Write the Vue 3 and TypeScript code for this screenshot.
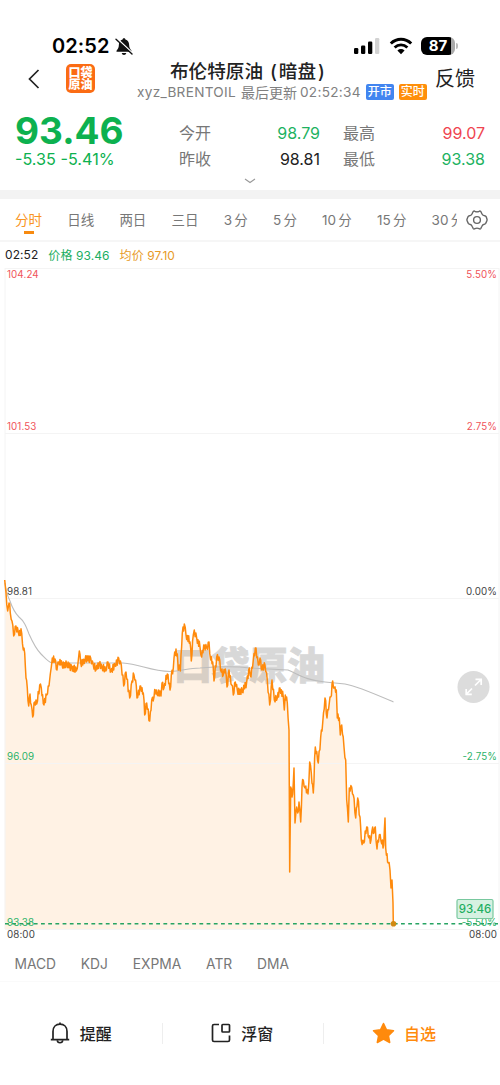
<script setup lang="ts">
interface Stat {
  label: string
  value: string
  tone: 'up' | 'down' | 'flat'
}

const stats: Stat[] = [
  { label: '今开', value: '98.79', tone: 'down' },
  { label: '最高', value: '99.07', tone: 'up' },
  { label: '昨收', value: '98.81', tone: 'flat' },
  { label: '最低', value: '93.38', tone: 'down' },
]

const periods: string[] = ['分时', '日线', '两日', '三日', '3 分', '5 分', '10 分', '15 分', '30 分']
const indicators: string[] = ['MACD', 'KDJ', 'EXPMA', 'ATR', 'DMA']
const gridRows: number[] = [0.5, 165.5, 330.5, 495.5, 661.5]

type Point = [number, number]

// Price samples in chart space: x is minutes scaled to pixels, y grows downward.
const samples: Point[] = [
  [4.7, 312], [6, 325], [7.7, 343], [9, 335], [10.3, 345], [12, 353], [13.7, 368], [16, 358], [18.3, 364], [21.7, 365],
  [23.3, 382], [24.7, 385], [26, 410], [27.3, 420], [28.7, 438], [30, 426], [31.3, 437], [32.7, 449], [34.7, 434],
  [36.7, 436], [39.7, 417], [41.3, 420], [44, 437], [46.7, 427], [49, 418], [50.3, 406], [51.3, 399], [52.3, 390],
  [55, 391], [57, 402], [58.7, 394], [62, 396], [66.7, 397], [71.7, 399], [76.3, 403], [78, 395], [79.3, 383],
  [80.7, 395], [85, 392], [90.7, 390], [93.3, 397], [96, 402], [99.3, 395], [102, 399], [105.7, 403], [108, 394],
  [111, 403], [115, 398], [118.7, 390], [121.3, 397], [123.7, 418], [126, 404], [129.7, 430], [132, 413], [134, 407],
  [135.6, 412], [137, 430], [140.7, 418], [143.3, 425], [144.7, 447], [146.7, 435], [149.7, 453], [151.7, 432],
  [154, 429], [155.3, 422], [157.3, 427], [160, 423], [161, 428], [162, 415], [164, 420], [167.3, 406], [170, 422],
  [171.3, 407], [173.3, 400], [174.7, 384], [177.3, 386], [178.3, 402], [179.3, 397], [180.3, 403], [182.3, 365],
  [184.3, 356], [186, 367], [190, 374], [191.3, 393], [193.3, 367], [194.3, 362], [196.7, 370], [200, 379],
  [201.7, 389], [204.3, 377], [206.7, 380], [209, 374], [210.7, 392], [212.7, 394], [214, 413], [216.7, 389],
  [219, 389], [221.3, 404], [223.3, 407], [225.3, 401], [227, 419], [229, 402], [231.7, 417], [233.3, 427],
  [235.3, 414], [237.3, 422], [242.3, 424], [246.7, 414], [249.3, 400], [251, 409], [253.3, 392], [256, 380],
  [258.3, 397], [260, 390], [262, 402], [265, 397], [267.3, 412], [269.7, 437], [272, 412], [274.3, 432],
  [277.3, 430], [280, 420], [283.3, 429], [284.3, 442], [285.3, 427], [287.3, 435], [289, 462], [289.7, 604],
  [290.7, 519], [292, 529], [293.3, 515], [294, 500], [295, 555], [296.7, 539], [297.7, 545], [299, 534],
  [300.7, 554], [302, 519], [303.3, 512], [305, 520], [308, 526], [309.7, 494], [311.3, 505], [313.3, 525],
  [315.3, 479], [318.3, 495], [320.7, 469], [322.7, 455], [325, 430], [327, 450], [329.3, 435], [330.7, 429],
  [332.7, 413], [334.3, 420], [336.3, 422], [337.3, 450], [339.3, 450], [340.3, 467], [341.7, 457], [344, 479],
  [345.7, 492], [346.7, 532], [348.3, 554], [349.3, 520], [351.7, 519], [353.3, 527], [355.7, 550], [357.7, 530],
  [360, 549], [361.3, 572], [363.7, 575], [366.7, 559], [369, 570], [371, 572], [372.7, 559], [374, 565],
  [375.3, 559], [377, 581], [379.3, 567], [381, 573], [383.7, 577], [385, 550], [385.7, 580], [388.3, 595],
  [390, 602], [391, 620], [392, 612], [393, 635], [393.3, 656],
]

// Fills gaps between samples with small ticks so the line keeps its intraday texture.
function withTicks(points: Point[]): Point[] {
  const out: Point[] = []
  let tick = 0
  points.forEach(([x, y], i) => {
    out.push([x, y])
    const next = points[i + 1]
    if (!next) return
    const count = Math.floor((next[0] - x) / 0.65)
    for (let k = 1; k < count; k++) {
      tick += 1
      const t = k / count
      const sway = (tick % 2 ? 1 : -1) * (1.8 + ((tick * 7) % 5) * 0.55)
      out.push([x + (next[0] - x) * t, y + (next[1] - y) * t + sway])
    }
  })
  return out
}

const pricePath = 'M' + withTicks(samples).map(([x, y]) => `${x.toFixed(1)} ${y.toFixed(1)}`).join('L')
const areaPath = `${pricePath}V661H4.7Z`
const averagePath =
  'M5 315C6 324 8 329 10 333C13 342 15 345 19 349C24 353 26 358 29 366C33 375 36 381 41 386C45 390 48 394 52 395H123' +
  'C140 396 150 403 170 403.5C182 403 188 400 200 400C212 399 235 398 250 400L288 402' +
  'C300 407 305 412 325 414L345 416C357 418 375 426 393.5 434'
</script>

<template>
  <main class="screen">
    <div class="status">
      <div class="clock">
        <span>02:52</span>
        <svg width="18" height="19" viewBox="0 0 18 19">
          <path d="M9 1.2c.9 0 1.3.5 1.4 1.2 2.6.7 3.6 2.8 3.7 5.2.1 3 .8 4.400 2.400 6.100v1.100H1.500v-1.100C3.200 12 3.800 10.500 3.900 7.600 4 5.200 5 3.100 7.600 2.400 7.700 1.700 8.100 1.200 9 1.200ZM6.700 16h4.600c-.3 1.300-1.100 2-2.300 2s-2-.7-2.300-2Z" fill="#111" />
          <path d="M1.500 1.200 18 16.500" stroke="#fff" stroke-width="1.600" />
          <path d="M1 2.300 17 17" stroke="#111" stroke-width="1.400" stroke-linecap="round" />
        </svg>
      </div>
      <div class="radios">
        <svg width="27" height="18" viewBox="0 0 27 18">
          <rect x="0" y="11" width="4.300" height="6" rx="1.200" />
          <rect x="7" y="8.500" width="4.300" height="8.500" rx="1.200" />
          <rect x="14" y="4.500" width="4.300" height="12.500" rx="1.200" />
          <rect x="21" y="1" width="4.300" height="16" rx="1.200" fill="#d2d2d2" />
        </svg>
        <svg class="wifi" width="24" height="18" viewBox="0 0 24 18">
          <path d="M1.800 6.500C7.700 .9 16.300 .9 22.200 6.500" fill="none" stroke="#000" stroke-width="3" />
          <path d="M5.600 10.500C9.400 7 14.600 7 18.400 10.500" fill="none" stroke="#000" stroke-width="2.900" />
          <path d="M8.400 13.500c2.200-1.900 5-1.900 7.200 0L12 17.200Z" />
        </svg>
        <div class="battery"><span class="cell">87</span><i class="cap"></i></div>
      </div>
    </div>

    <header class="nav">
      <svg class="back" width="12" height="20" viewBox="0 0 12 20">
        <path d="M10.500 1 1.500 10l9 9" fill="none" stroke="#222" stroke-width="1.700" />
      </svg>
      <div class="logo"><span>口袋</span><span>原油</span></div>
      <div class="heading">
        <h1>布伦特原油<span class="paren-open">(</span>暗盘<span class="paren-close">)</span></h1>
        <div class="sub">
          <span class="symbol">xyz_BRENTOIL</span>
          <span class="updated">最后更新</span>
          <span class="symbol">02:52:34</span>
          <b class="tag open">开市</b>
          <b class="tag live">实时</b>
        </div>
      </div>
      <span class="feedback">反馈</span>
    </header>

    <section class="quote">
      <div class="last">
        <strong>93.46</strong>
        <span>-5.35 -5.41%</span>
      </div>
      <dl class="stats">
        <div v-for="s in stats" :key="s.label" class="stat">
          <dt>{{ s.label }}</dt>
          <dd :class="s.tone">{{ s.value }}</dd>
        </div>
      </dl>
    </section>
    <div class="expand">
      <svg width="12" height="6" viewBox="0 0 12 6">
        <path d="M1 1l5 3.500L11 1" fill="none" stroke="#999" stroke-width="1.100" />
      </svg>
    </div>
    <div class="band"></div>

    <nav class="periods">
      <div class="track">
        <span v-for="(p, i) in periods" :key="p" class="period" :class="{ active: i === 0 }">{{ p }}</span>
      </div>
      <svg class="gear" width="22" height="20" viewBox="0 0 22 20">
        <path d="M7.200 1.500Q8 .7 9 1.300 11 2.400 13 1.300 14 .7 14.800 1.500L16 4Q16.800 5.600 18.600 5.700 19.800 5.800 20.200 6.800L21 9.300Q21.200 10 20.900 10.700L19.700 13.400Q19.200 14.200 18.300 14.300 16.600 14.500 15.900 16.200L14.900 18.300Q14.200 19.300 13.100 18.700 11 17.600 8.900 18.700 7.800 19.300 7.100 18.300L6.100 16.200Q5.400 14.500 3.700 14.300 2.800 14.200 2.300 13.400L1.100 10.700Q.8 10 1 9.300L2 6.800Q2.400 5.800 3.500 5.700 5.200 5.600 6 4Z" fill="none" stroke="#666" stroke-width="1.400" stroke-linejoin="round" />
        <circle cx="11" cy="10" r="3.400" fill="none" stroke="#666" stroke-width="1.400" />
      </svg>
    </nav>

    <div class="legend">
      <span class="time">02:52</span>
      <span class="price">价格 93.46</span>
      <span class="avg">均价 97.10</span>
    </div>

    <section class="chart">
      <svg width="500" height="676" viewBox="0 0 500 676">
        <path :d="areaPath" fill="#fff2e4" />
        <line v-for="y in gridRows" :key="y" x1="5" :y1="y" x2="499" :y2="y" class="grid" />
        <path d="M5 0V661M499 0V661" class="grid" />
        <text x="174" y="411" class="watermark" textLength="151" lengthAdjust="spacingAndGlyphs">口袋原油</text>
        <path :d="averagePath" fill="none" stroke="#bdbdbd" stroke-width="1.100" />
        <path :d="pricePath" fill="none" stroke="#ff8a0c" stroke-width="1.500" stroke-linejoin="round" />
        <g class="axis">
          <text x="7" y="10" class="up">104.24</text>
          <text x="7" y="162" class="up">101.53</text>
          <text x="7" y="327">98.81</text>
          <text x="7" y="492" class="down">96.09</text>
          <text x="7" y="658" class="down">93.38</text>
          <text x="7" y="670">08:00</text>
          <g text-anchor="end">
            <text x="497" y="10" class="up">5.50%</text>
            <text x="497" y="162" class="up">2.75%</text>
            <text x="497" y="327">0.00%</text>
            <text x="497" y="492" class="down">-2.75%</text>
            <text x="497" y="658" class="down">-5.50%</text>
            <text x="497" y="670">08:00</text>
          </g>
        </g>
        <line x1="5" y1="655.800" x2="498" y2="655.800" stroke="#27a463" stroke-width="1.500" stroke-dasharray="3.800 3.400" />
        <circle cx="393.500" cy="655.800" r="2.800" fill="#d18a13" />
        <rect x="457" y="631.500" width="36" height="19" rx="1.500" fill="#d6f1e2" stroke="#78c89e" stroke-width="1.200" />
        <text x="475" y="645.300" class="badge" text-anchor="middle">93.46</text>
        <circle cx="473.500" cy="419" r="16" fill="#dcdcdc" />
        <path d="M475 417.500 481 411.500M475.500 411.300H481.200V417M472 420.500 466.500 426M466.200 421V426.300H471.800" fill="none" stroke="#fff" stroke-width="1.700" />
      </svg>
    </section>

    <div class="indicators">
      <span v-for="n in indicators" :key="n">{{ n }}</span>
    </div>

    <footer class="actions">
      <div class="action">
        <svg width="20" height="22" viewBox="0 0 20 22">
          <path d="M3 17V9.500C3 5 6 2.200 10 2.200S17 5 17 9.500V17M.8 17.600H19.200M10 .5V2.200" fill="none" stroke="#222" stroke-width="1.700" />
          <path d="M7.300 18.200C7.500 21.600 12.500 21.600 12.700 18.200" fill="none" stroke="#222" stroke-width="1.600" />
        </svg>
        <span>提醒</span>
      </div>
      <div class="action">
        <svg width="20" height="20" viewBox="0 0 20 20">
          <path d="M8 1.500H3Q1.500 1.500 1.500 3V17Q1.500 18.500 3 18.500H17Q18.500 18.500 18.500 17V12.500" fill="none" stroke="#222" stroke-width="1.700" />
          <rect x="11" y="1.500" width="7.500" height="7.500" rx=".8" fill="none" stroke="#222" stroke-width="1.700" />
        </svg>
        <span>浮窗</span>
      </div>
      <div class="action fav">
        <svg width="23" height="22" viewBox="0 0 23 22">
          <path d="M11.500 1.500 14.500 7.800 21.500 8.700 16.400 13.600 17.700 20.500 11.500 17.200 5.300 20.500 6.600 13.600 1.500 8.700 8.500 7.800Z" fill="#ff8a0c" stroke="#ff8a0c" stroke-width="1.500" stroke-linejoin="round" />
        </svg>
        <span>自选</span>
      </div>
    </footer>
  </main>
</template>

<style>
body {
  margin: 0;
  background: #fff;
}
</style>

<style scoped>
.screen {
  width: 500px;
  height: 1085px;
  overflow: hidden;
  background: #fff;
  color: #222;
  font-family: Inter, "Noto Sans CJK SC", sans-serif;
  display: flex;
  flex-direction: column;
}
.screen > * {
  flex: none;
  box-sizing: border-box;
}
.status {
  height: 58px;
  padding: 34px 42px 0 52px;
  display: flex;
  justify-content: space-between;
}
.clock {
  display: flex;
  align-items: center;
  height: 24px;
  gap: 5px;
  font-size: 20px;
  font-weight: 600;
  color: #000;
}
.clock span {
  letter-spacing: 0.1px;
}
.radios {
  display: flex;
  align-items: center;
  height: 24px;
}
.wifi {
  margin: 0 8px 0 8px;
}
.battery {
  display: flex;
  align-items: center;
  gap: 1px;
}
.cell {
  width: 34px;
  height: 18px;
  border-radius: 6px;
  background: linear-gradient(90deg, #000 88%, #aaa 88%);
  color: #fff;
  font-size: 15px;
  line-height: 18px;
  font-weight: 700;
  text-align: center;
}
.cap {
  width: 2px;
  height: 6px;
  border-radius: 0 2px 2px 0;
  background: #bbb;
}
.nav {
  height: 46px;
  padding: 0 24px 0 28px;
  display: flex;
  align-items: flex-start;
}
.back {
  margin-top: 11px;
}
.logo {
  width: 29px;
  height: 29px;
  margin: 6px 0 0 26px;
  border-radius: 5px;
  background: #fb6c14;
  color: #fff;
  display: flex;
  flex-direction: column;
  align-items: center;
  justify-content: center;
  font-size: 12px;
  line-height: 12px;
  font-weight: 900;
}
.heading {
  width: 298px;
  margin-left: 42px;
}
h1 {
  margin: 0;
  padding-left: 33px;
  font-size: 18.6px;
  line-height: 26px;
  font-weight: 500;
  white-space: pre;
}
.paren-open {
  margin: 0 2px 0 7px;
}
.paren-close {
  margin-left: 2px;
}
.sub {
  display: flex;
  align-items: center;
  height: 16px;
  font-size: 13px;
  color: #808080;
  white-space: nowrap;
}
.symbol {
  font-size: 13.600px;
  letter-spacing: 0.3px;
}
.updated {
  margin: 0 3px 0 5px;
  font-size: 14px;
}
.tag {
  width: 28px;
  height: 16px;
  border-radius: 2px;
  color: #fff;
  font-size: 12px;
  line-height: 16px;
  font-weight: 500;
  text-align: center;
}
.open {
  margin-left: 5px;
  background: #4285f0;
}
.live {
  margin-left: 5px;
  background: #ff8f0a;
}
.feedback {
  margin-top: 7px;
  font-size: 20px;
  line-height: 28px;
}
.quote {
  height: 72px;
  padding: 8px 15px 0;
  display: flex;
}
.last {
  width: 164px;
  display: flex;
  flex-direction: column;
  color: #0db14f;
}
.last strong {
  font-size: 37px;
  line-height: 37px;
  font-weight: 700;
}
.last span {
  font-size: 16.200px;
  line-height: 20px;
}
.stats {
  margin: 0;
  padding-top: 8px;
  display: grid;
  grid-template-columns: 141px 142px;
  grid-template-rows: 26px 26px;
  column-gap: 23px;
}
.stat {
  display: flex;
  justify-content: space-between;
  font-size: 16px;
  line-height: 26px;
}
dt {
  color: #777;
}
dd {
  margin: 0;
}
dd.up {
  color: #ef4550;
}
dd.down {
  color: #1db261;
}
.expand {
  height: 14px;
  display: flex;
  justify-content: center;
  padding-top: 2px;
}
.band {
  height: 9px;
  background: #f3f3f3;
}
.periods {
  height: 43px;
  border-bottom: 2px solid #f6f6f6;
  padding: 0 12px 0 15px;
  display: flex;
  justify-content: space-between;
}
.track {
  width: 442px;
  overflow: hidden;
  display: flex;
  gap: 25.200px;
}
.period {
  flex: none;
  height: 34px;
  padding-top: 9px;
  box-sizing: border-box;
  font-size: 13.500px;
  line-height: 24px;
  color: #777;
  white-space: nowrap;
  word-spacing: -1.600px;
}
.period.active {
  color: #f99422;
  display: flex;
  flex-direction: column;
  align-items: center;
}
.period.active::after {
  content: "";
  flex: none;
  margin-top: -1px;
  width: 10px;
  height: 3px;
  background: #f78a10;
}
.gear {
  margin-top: 11px;
}
.legend {
  height: 26px;
  padding: 0 5px 1px;
  display: flex;
  align-items: center;
  gap: 10px;
  font-size: 12px;
  letter-spacing: 0.08px;
}
.price {
  color: #1bae61;
}
.avg {
  color: #e79a27;
}
.chart {
  height: 676px;
}
.chart svg {
  display: block;
}
.grid {
  stroke: #f4f4f4;
  stroke-width: 1;
  fill: none;
}
.watermark {
  font-family: "Noto Sans CJK SC", sans-serif;
  font-size: 38px;
  font-weight: 900;
  fill: #777;
  stroke: #777;
  stroke-width: 1;
  opacity: 0.28;
}
.axis text {
  font-size: 9.800px;
  fill: #444;
  letter-spacing: 0.1px;
}
.axis text.up {
  fill: #f0535a;
}
.axis text.down {
  fill: #2bb268;
}
.badge {
  font-size: 11.500px;
  font-weight: 500;
  fill: #1fae61;
}
.indicators {
  height: 38px;
  padding: 2px 14.500px 0;
  display: flex;
  align-items: center;
  gap: 24.800px;
  font-size: 13.800px;
  color: #777;
  border-bottom: 1px solid #fafafa;
}
.actions {
  height: 103px;
  display: flex;
  padding-top: 37px;
}
.action {
  width: 161.500px;
  height: 28px;
  display: flex;
  align-items: center;
  justify-content: center;
  gap: 10px;
  font-size: 16px;
  font-weight: 500;
}
.action + .action {
  background: linear-gradient(#eee, #eee) left center / 1px 21px no-repeat;
}
.action:last-child {
  gap: 9px;
  width: 162px;
}
.fav {
  color: #ff8a0c;
}
</style>
